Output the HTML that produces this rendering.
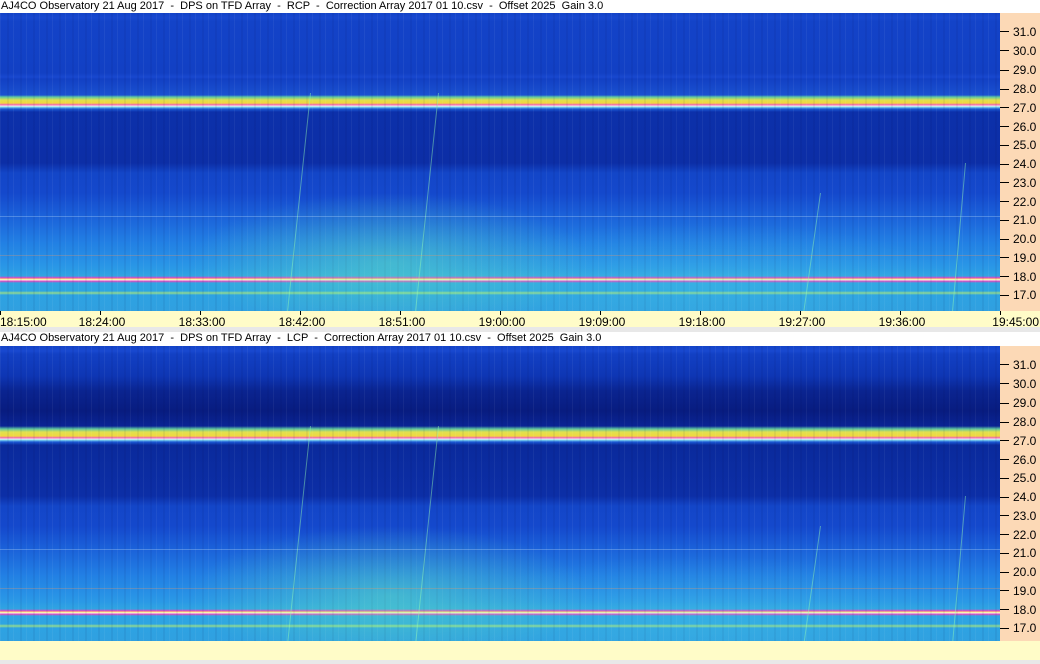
<!DOCTYPE html>
<html><head><meta charset="utf-8"><style>
*{margin:0;padding:0;box-sizing:border-box}
body{width:1040px;height:664px;position:relative;background:#fff;overflow:hidden;font-family:"Liberation Sans",sans-serif;font-size:11px;color:#000}
.title{position:absolute;left:1px;height:13px;line-height:13px;white-space:pre;font-size:11px}
.spec{position:absolute;left:0;width:1000px;height:298px;overflow:hidden}
.s1{top:13px;background:
 radial-gradient(ellipse 200px 70px at 390px 250px,rgba(120,255,170,.35),rgba(120,255,170,0) 100%),
 radial-gradient(ellipse 260px 60px at 700px 270px,rgba(90,220,230,.2),rgba(90,220,230,0) 100%),
 repeating-linear-gradient(90deg,rgba(255,255,255,.05) 0 1px,transparent 1px 7px,rgba(0,0,60,.06) 7px 9px,transparent 9px 13px),
 linear-gradient(180deg,#1343c8 0,#1848d0 5px,#1343c8 8px,#1240c4 60px,#1848d0 64px,#1240c4 66px,#1a50d0 82px,#60c8a0 84px,#e0e050 87px,#f0d840 90px,#f060c0 92px,#f8f8f0 93px,#80d8f0 94px,#1b58d4 96px,#0c30aa 99px,#0c2ea6 150px,#1346c8 160px,#1448cc 180px,#1a5ed8 200px,#2280e4 230px,#2a98e6 255px,#30a4e2 263px,#f040c0 265px,#f8f060 266px,#f8f8f8 267px,#e848b8 268px,#2ea4e4 270px,#2ea4e2 278px,#90d890 280px,#2ea2e2 282px,#30a0e0 298px)}
.s2{top:346px;background:
 radial-gradient(ellipse 200px 70px at 390px 250px,rgba(120,255,170,.35),rgba(120,255,170,0) 100%),
 radial-gradient(ellipse 260px 60px at 700px 270px,rgba(90,220,230,.2),rgba(90,220,230,0) 100%),
 repeating-linear-gradient(90deg,rgba(255,255,255,.05) 0 1px,transparent 1px 7px,rgba(0,0,60,.06) 7px 9px,transparent 9px 13px),
 linear-gradient(180deg,#1343c8 0,#1848d0 5px,#1240c4 8px,#0e36b4 30px,#0a2490 45px,#081c80 65px,#0a2494 80px,#60c8a0 83px,#e0e050 86px,#f0d840 90px,#f060c0 92px,#f8f8f0 93px,#80d8f0 94px,#1b58d4 96px,#0a2a9c 99px,#0c2ea6 150px,#1346c8 160px,#1448cc 180px,#1a5ed8 200px,#2280e4 230px,#2a98e6 255px,#30a4e2 263px,#f040c0 265px,#f8f060 266px,#f8f8f8 267px,#e848b8 268px,#2ea4e4 270px,#2ea4e2 278px,#90d890 280px,#2ea2e2 282px,#30a0e0 298px)}
.yax{position:absolute;left:1000px;width:40px;background:#fcd9b6}
.yt{position:absolute;left:0;height:1px;width:9px;background:#000}
.yl{position:absolute;left:13px;font-size:12px;line-height:12px}
.xax{position:absolute;left:0;width:1040px;background:#fffcc8}
.xt{position:absolute;top:0;width:1px;height:4px;background:#000}
.xl{position:absolute;top:5px;font-size:12px;line-height:12px;width:60px;text-align:center}
.gray{position:absolute;left:0;width:1040px;background:#e8e8e8}
.line{position:absolute;left:0;width:1000px}
.vs{position:absolute;width:1px;background:rgba(150,255,180,.45);transform-origin:top left}
</style></head><body>
<div class="title" style="top:0">AJ4CO Observatory 21 Aug 2017  -  DPS on TFD Array  -  RCP  -  Correction Array 2017 01 10.csv  -  Offset 2025  Gain 3.0</div>
<div class="spec s1">
<div class="vs" style="left:310px;top:80px;height:220px;transform:skewX(-6deg)"></div>
<div class="vs" style="left:438px;top:80px;height:220px;transform:skewX(-6deg)"></div>
<div class="vs" style="left:820px;top:180px;height:120px;transform:skewX(-8deg)"></div>
<div class="vs" style="left:965px;top:150px;height:150px;transform:skewX(-5deg)"></div>
<div class="line" style="top:203px;height:1px;background:rgba(200,230,255,.3)"></div>
<div class="line" style="top:242px;height:1px;background:rgba(240,150,100,.3)"></div>
</div>
<div class="yax" style="top:13px;height:298px">
<div class="yt" style="top:18px"></div><div class="yl" style="top:13px">31.0</div>
<div class="yt" style="top:37px"></div><div class="yl" style="top:32px">30.0</div>
<div class="yt" style="top:57px"></div><div class="yl" style="top:51px">29.0</div>
<div class="yt" style="top:76px"></div><div class="yl" style="top:70px">28.0</div>
<div class="yt" style="top:94px"></div><div class="yl" style="top:89px">27.0</div>
<div class="yt" style="top:113px"></div><div class="yl" style="top:108px">26.0</div>
<div class="yt" style="top:132px"></div><div class="yl" style="top:126px">25.0</div>
<div class="yt" style="top:151px"></div><div class="yl" style="top:145px">24.0</div>
<div class="yt" style="top:169px"></div><div class="yl" style="top:164px">23.0</div>
<div class="yt" style="top:188px"></div><div class="yl" style="top:183px">22.0</div>
<div class="yt" style="top:207px"></div><div class="yl" style="top:201px">21.0</div>
<div class="yt" style="top:226px"></div><div class="yl" style="top:220px">20.0</div>
<div class="yt" style="top:244px"></div><div class="yl" style="top:239px">19.0</div>
<div class="yt" style="top:263px"></div><div class="yl" style="top:258px">18.0</div>
<div class="yt" style="top:282px"></div><div class="yl" style="top:276px">17.0</div>
</div>
<div class="xax" style="top:311px;height:17px">
<div class="xt" style="left:0"></div><div class="xl" style="left:0;text-align:left">18:15:00</div>
<div class="xt" style="left:100px"></div><div class="xl" style="left:72px">18:24:00</div>
<div class="xt" style="left:200px"></div><div class="xl" style="left:172px">18:33:00</div>
<div class="xt" style="left:300px"></div><div class="xl" style="left:272px">18:42:00</div>
<div class="xt" style="left:400px"></div><div class="xl" style="left:372px">18:51:00</div>
<div class="xt" style="left:500px"></div><div class="xl" style="left:472px">19:00:00</div>
<div class="xt" style="left:600px"></div><div class="xl" style="left:572px">19:09:00</div>
<div class="xt" style="left:700px"></div><div class="xl" style="left:672px">19:18:00</div>
<div class="xt" style="left:800px"></div><div class="xl" style="left:772px">19:27:00</div>
<div class="xt" style="left:900px"></div><div class="xl" style="left:872px">19:36:00</div>
<div class="xt" style="left:1000px"></div><div class="xl" style="left:979px;text-align:right">19:45:00</div>
</div>
<div class="gray" style="top:327px;height:5px"></div>
<div class="title" style="top:332px">AJ4CO Observatory 21 Aug 2017  -  DPS on TFD Array  -  LCP  -  Correction Array 2017 01 10.csv  -  Offset 2025  Gain 3.0</div>
<div class="spec s2">
<div class="vs" style="left:310px;top:80px;height:220px;transform:skewX(-6deg)"></div>
<div class="vs" style="left:438px;top:80px;height:220px;transform:skewX(-6deg)"></div>
<div class="vs" style="left:820px;top:180px;height:120px;transform:skewX(-8deg)"></div>
<div class="vs" style="left:965px;top:150px;height:150px;transform:skewX(-5deg)"></div>
<div class="line" style="top:203px;height:1px;background:rgba(200,230,255,.3)"></div>
<div class="line" style="top:242px;height:1px;background:rgba(240,150,100,.3)"></div>
</div>
<div class="yax" style="top:346px;height:295px">
<div class="yt" style="top:18px"></div><div class="yl" style="top:13px">31.0</div>
<div class="yt" style="top:37px"></div><div class="yl" style="top:32px">30.0</div>
<div class="yt" style="top:57px"></div><div class="yl" style="top:51px">29.0</div>
<div class="yt" style="top:76px"></div><div class="yl" style="top:70px">28.0</div>
<div class="yt" style="top:94px"></div><div class="yl" style="top:89px">27.0</div>
<div class="yt" style="top:113px"></div><div class="yl" style="top:108px">26.0</div>
<div class="yt" style="top:132px"></div><div class="yl" style="top:126px">25.0</div>
<div class="yt" style="top:151px"></div><div class="yl" style="top:145px">24.0</div>
<div class="yt" style="top:169px"></div><div class="yl" style="top:164px">23.0</div>
<div class="yt" style="top:188px"></div><div class="yl" style="top:183px">22.0</div>
<div class="yt" style="top:207px"></div><div class="yl" style="top:201px">21.0</div>
<div class="yt" style="top:226px"></div><div class="yl" style="top:220px">20.0</div>
<div class="yt" style="top:244px"></div><div class="yl" style="top:239px">19.0</div>
<div class="yt" style="top:263px"></div><div class="yl" style="top:258px">18.0</div>
<div class="yt" style="top:282px"></div><div class="yl" style="top:276px">17.0</div>
</div>
<div class="xax" style="top:641px;height:19px"></div>
<div class="gray" style="top:660px;height:4px"></div>
</body></html>
